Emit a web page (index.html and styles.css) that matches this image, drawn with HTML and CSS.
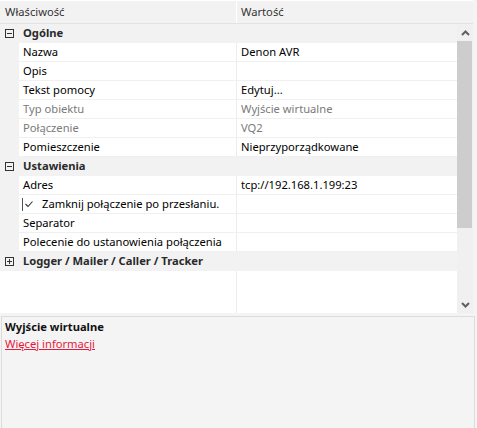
FILE: index.html
```html
<!DOCTYPE html>
<html lang="pl">
<head>
<meta charset="utf-8">
<link rel="stylesheet" href="styles.css">
</head>
<body>
<div class="app">
  <div class="header">
    <div class="hcell">Właściwość</div>
    <div class="hcell hval">Wartość</div>
  </div>
  <div class="body">
    <div class="rows">
      <div class="group"><span class="box minus"></span><span class="gname">Ogólne</span></div>
      <div class="row"><div class="name">Nazwa</div><div class="val">Denon AVR</div></div>
      <div class="row"><div class="name">Opis</div><div class="val"></div></div>
      <div class="row"><div class="name">Tekst pomocy</div><div class="val">Edytuj...</div></div>
      <div class="row dis"><div class="name">Typ obiektu</div><div class="val">Wyjście wirtualne</div></div>
      <div class="row dis"><div class="name">Połączenie</div><div class="val">VQ2</div></div>
      <div class="row"><div class="name">Pomieszczenie</div><div class="val">Nieprzyporządkowane</div></div>
      <div class="group"><span class="box minus"></span><span class="gname">Ustawienia</span></div>
      <div class="row"><div class="name">Adres</div><div class="val">tcp://192.168.1.199:23</div></div>
      <div class="row"><div class="name chk"><span class="cb"><svg width="10" height="10" viewBox="0 0 10 10"><polyline points="1.5,5 4,7.5 8.5,2.5" fill="none" stroke="#333" stroke-width="1.1"/></svg></span>Zamknij połączenie po przesłaniu.</div><div class="val"></div></div>
      <div class="row"><div class="name">Separator</div><div class="val"></div></div>
      <div class="row"><div class="name">Polecenie do ustanowienia połączenia</div><div class="val"></div></div>
      <div class="group"><span class="box plus"></span><span class="gname">Logger / Mailer / Caller / Tracker</span></div>
      <div class="filler"><div class="fname"></div><div></div></div>
    </div>
    <div class="scroll">
      <div class="arrow"><svg width="9" height="6" viewBox="0 0 9 6"><polyline points="1,5 4.5,1.5 8,5" fill="none" stroke="#606060" stroke-width="2"/></svg></div>
      <div class="track"><div class="thumb"></div></div>
      <div class="arrow"><svg width="9" height="6" viewBox="0 0 9 6"><polyline points="1,1 4.5,4.5 8,1" fill="none" stroke="#606060" stroke-width="2"/></svg></div>
    </div>
  </div>
  <div class="panel">
    <div class="ptitle">Wyjście wirtualne</div>
    <a class="plink" href="#">Więcej informacji</a>
  </div>
</div>
</body>
</html>
```
FILE: styles.css
```css
html, body {
  margin: 0;
  padding: 0;
}
body {
  width: 477px;
  height: 428px;
  overflow: hidden;
  background: #f4f4f4;
  font-family: "Noto Sans", "Open Sans", sans-serif;
  font-size: 11.2px;
  color: #000000;
}
.app {
  display: flex;
  flex-direction: column;
  width: 477px;
  height: 428px;
}
.header {
  display: grid;
  grid-template-columns: 237px 1fr;
  width: 473px;
  height: 22px;
  background: #f2f2f2;
  border-top: 1px solid #ffffff;
  border-bottom: 1px solid #e3e3e3;
  color: #333;
}
.hcell {
  padding-left: 5px;
  line-height: 22px;
  border-right: 1px solid #ffffff;
}
.hval {
  padding-left: 4px;
  border-right: none;
}
.body {
  display: flex;
  height: 289px;
  width: 473px;
}
.rows {
  width: 457px;
  background: #ffffff;
  display: flex;
  flex-direction: column;
}
.group {
  height: 18px;
  border-bottom: 1px solid #f2f2f2;
  background: #f2f2f2;
  display: flex;
  align-items: center;
  flex-shrink: 0;
}
.box {
  width: 7px;
  height: 7px;
  border: 1px solid #333;
  margin-left: 5px;
  margin-right: 9px;
  position: relative;
  flex-shrink: 0;
}
.box::before {
  content: "";
  position: absolute;
  left: 1px;
  top: 3px;
  width: 5px;
  height: 1px;
  background: #333;
}
.plus::after {
  content: "";
  position: absolute;
  left: 3px;
  top: 1px;
  width: 1px;
  height: 5px;
  background: #333;
}
.gname {
  font-weight: bold;
  color: #2a2a2a;
  line-height: 18px;
}
.row {
  display: grid;
  grid-template-columns: 237px 1fr;
  height: 19px;
  flex-shrink: 0;
  background: #f2f2f2;
}
.name {
  margin-left: 19px;
  padding-left: 4px;
  border-right: 1px solid #ececec;
  border-bottom: 1px solid #f0f0f0;
  line-height: 18px;
  white-space: nowrap;
  overflow: hidden;
  display: flex;
  align-items: center;
  background: #ffffff;
}
.val {
  padding-left: 4px;
  border-bottom: 1px solid #f0f0f0;
  line-height: 18px;
  white-space: nowrap;
  background: #ffffff;
}
.dis .name, .dis .val {
  color: #7a7a7a;
}
.chk {
  padding-left: 3px;
}
.cb {
  width: 12px;
  height: 13px;
  border-left: 1px solid #555;
  display: flex;
  align-items: center;
  justify-content: center;
  margin-right: 7px;
}
.filler {
  flex: 1;
  display: grid;
  grid-template-columns: 237px 1fr;
}
.fname {
  border-right: 1px solid #ececec;
}
.scroll {
  width: 16px;
  background: #f0f0f0;
  display: flex;
  flex-direction: column;
}
.arrow {
  height: 17px;
  display: flex;
  align-items: center;
  justify-content: center;
}
.track {
  flex: 1;
}
.thumb {
  height: 187px;
  background: #cdcdcd;
  width: 15px;
}
.panel {
  margin-top: 3px;
  margin-left: 1px;
  width: 469px;
  flex: 1;
  border: 1px solid #dcdcdc;
  border-bottom: none;
  background: #f4f4f4;
  padding: 1px 0 0 3px;
}
.ptitle {
  font-weight: bold;
  color: #111;
  line-height: 17px;
}
.plink {
  color: #e8173c;
  text-decoration: underline;
  line-height: 17px;
}
```
